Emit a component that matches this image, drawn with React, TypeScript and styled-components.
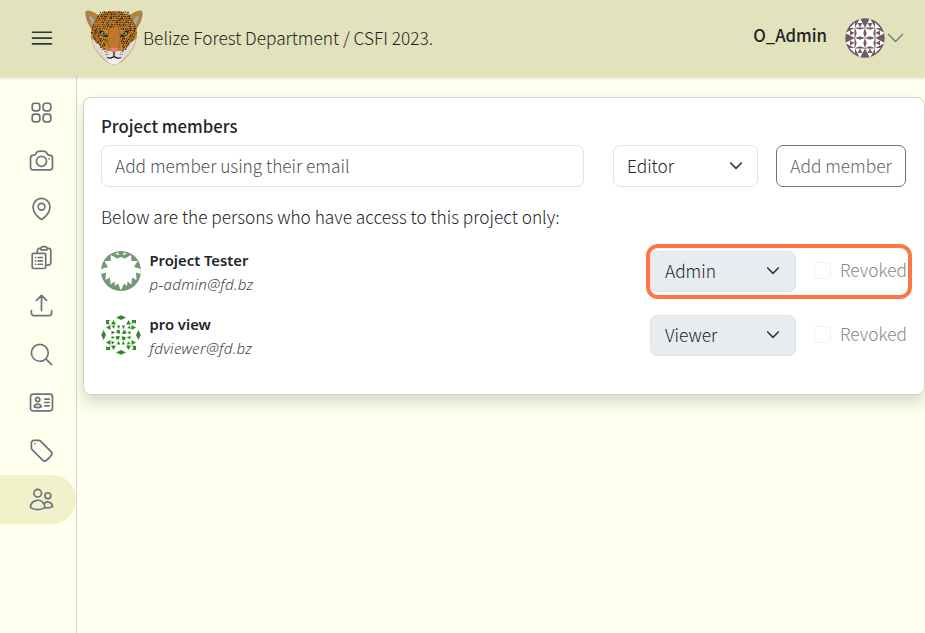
import React from 'react';
import styled, { createGlobalStyle } from 'styled-components';
import {
  HiOutlineSquares2X2,
  HiOutlineCamera,
  HiOutlineMapPin,
  HiOutlineClipboardDocumentList,
  HiOutlineArrowUpTray,
  HiOutlineMagnifyingGlass,
  HiOutlineIdentification,
  HiOutlineTag,
  HiOutlineUsers,
} from 'react-icons/hi2';

const GlobalStyle = createGlobalStyle`
  *, *::before, *::after { box-sizing: border-box; }
  body {
    margin: 0;
    overflow: hidden;
    background: #feffec;
    color: #212529;
    font-family: "Noto Sans CJK SC", "Noto Sans", sans-serif;
    font-size: 17.3px;
    font-weight: 300;
    line-height: 26px;
  }
  button, input { font: inherit; }
`;

const Page = styled.div`
  display: flex;
  flex-direction: column;
  height: 633px;
`;

const Header = styled.header`
  position: relative;
  z-index: 1;
  display: flex;
  align-items: center;
  flex: 0 0 77px;
  padding: 0 22px 1px 31px;
  background: #e2e2bd;
  box-shadow: 0 1px 3px rgba(0, 0, 0, 0.16);
`;

const MenuButton = styled.button`
  display: flex;
  margin-right: 32px;
  padding: 0;
  border: 0;
  background: none;
`;

const Brand = styled.div`
  display: flex;
  align-items: center;
  flex: 1;
  white-space: nowrap;
`;

const UserName = styled.span`
  margin: -7px 18px 0 0;
  font-weight: 500;
  font-size: 16.7px;
`;

const Chevron = styled.svg<{ $tone: string; $thick: number }>`
  flex: none;
  fill: none;
  stroke: ${(p) => p.$tone};
  stroke-width: ${(p) => p.$thick};
  stroke-linecap: round;
  stroke-linejoin: round;
`;

const Body = styled.div`
  display: flex;
  flex: 1;
  min-height: 0;
`;

const Sidebar = styled.nav`
  flex: 0 0 77px;
  padding-top: 11px;
  border-right: 1px solid #d5d6d8;
`;

const NavItem = styled.a<{ $active?: boolean }>`
  display: flex;
  align-items: center;
  height: 48.4px;
  padding-left: 27.5px;
  border-radius: 0 24px 24px 0;
  background: ${(p) => (p.$active ? '#f1f2c9' : 'transparent')};
  color: #6b7280;

  svg {
    width: 27px;
    height: 27px;
    stroke-width: 1.5;
  }
`;

const Main = styled.main`
  flex: 1;
  padding: 20px 0 0 6px;
`;

const Card = styled.section`
  height: 298px;
  padding: 15px 18px 0 17px;
  border: 1px solid #cfd0cb;
  border-radius: 8px;
  background: #fff;
  box-shadow: 0 8px 16px rgba(0, 0, 0, 0.15);
`;

const Heading = styled.h2`
  margin: 0 0 6px;
  font-size: 16.7px;
  font-weight: 500;
  line-height: 26px;
`;

const AddRow = styled.form`
  display: flex;
  height: 42px;
`;

const EmailInput = styled.input`
  width: 483px;
  margin-right: 29px;
  padding: 0 13px;
  border: 1px solid #dee2e6;
  border-radius: 7px;
  background: #fff;

  &::placeholder {
    color: #4f555b;
    opacity: 1;
  }
`;

const Select = styled.div<{ $disabled?: boolean }>`
  display: flex;
  align-items: center;
  justify-content: space-between;
  width: ${(p) => (p.$disabled ? 146 : 145)}px;
  height: ${(p) => (p.$disabled ? 41 : 42)}px;
  padding: 0 ${(p) => (p.$disabled ? 15 : 14)}px 0 ${(p) => (p.$disabled ? 14 : 13)}px;
  border: 1px solid #dee2e6;
  border-radius: 7px;
  background: ${(p) => (p.$disabled ? '#e9ecef' : '#fff')};
`;

const AddButton = styled.button`
  width: 130px;
  margin-left: 18px;
  padding: 0;
  border: 1px solid #6c757d;
  border-radius: 7px;
  background: transparent;
  color: #5e6870;
`;

const Note = styled.p`
  margin: 17px 0 14px;
`;

const Members = styled.ul`
  display: grid;
  grid-auto-rows: 64px;
  margin: 0;
  padding: 0;
  list-style: none;
`;

const Member = styled.li`
  display: flex;
  align-items: center;
  height: 54px;
`;

const Identity = styled.div`
  flex: 1;
  padding: 1px 0 0 8.5px;
  font-family: "Noto Sans", sans-serif;
`;

const Name = styled.div`
  font-size: 14.8px;
  font-weight: 650;
  line-height: 24px;
`;

const Email = styled.div`
  color: #42474c;
  font-size: 15.2px;
  font-style: italic;
  letter-spacing: 0.27px;
  line-height: 24px;
`;

const Access = styled.div`
  position: relative;
  display: flex;
  align-items: center;
  height: 54px;
`;

const Revoke = styled.label`
  display: flex;
  align-items: center;
  width: 110px;
  padding: 0 0 2px 18px;
  color: #85888a;
  white-space: nowrap;
`;

const CheckBox = styled.span`
  flex: none;
  width: 17px;
  height: 17px;
  margin-right: 9px;
  border: 1px solid #eeeff1;
  border-radius: 4px;
`;

const Highlight = styled.div`
  position: absolute;
  inset: 0 -6px -1px -4px;
  border: 4px solid #ff7645;
  border-radius: 12px;
  pointer-events: none;
`;

const MenuIcon = () => (
  <svg width="22" height="16" viewBox="0 0 22 16" stroke="#30363a" strokeWidth="1.6" strokeLinecap="round">
    <path d="M1.5 2.2h19M1.5 8.1h19M1.5 13.9h19" />
  </svg>
);

// Deterministic pseudo-random placement of the coat's rosettes.
const noise = (n: number) => {
  const v = Math.sin(n * 127.1) * 43758.5453;
  return v - Math.floor(v);
};

const spots: { x: number; y: number; r: number; a: number }[] = [];
for (let row = 0; row < 20; row++) {
  for (let col = 0; col < 22; col++) {
    const n = row * 25 + col + 1;
    const x = 7 + col * 2.1 + (row % 2) + (noise(n) - 0.5) * 0.8;
    const y = 2.3 + row * 2.05 + (noise(n + 900) - 0.5) * 0.8;
    const dx = Math.abs(x - 29);
    const bridge = y > 17 && dx < 6 + (y - 17) * 0.1;
    const edge = y < 15 ? 14 + y * 0.55 : 23 - Math.max(0, y - 26) * 0.8;
    const eye = dx > 6 && dx < 15 && y > 20 && y < 27;
    if (!bridge && !eye && dx < edge - 0.8) {
      spots.push({ x, y, r: 0.45 + 0.4 * noise(n + 1700), a: noise(n + 2500) * 180 });
    }
  }
}

const mirrored = [undefined, 'translate(58 0) scale(-1 1)'];

const Jaguar = () => (
  <svg width="58" height="56" viewBox="0 0 58 56">
    {mirrored.map((transform, i) => (
      <g key={i} transform={transform}>
        <path d="M.5 2C1-.2 4 .1 7 1.4c3 1.3 6 3 8 4.600L7 19.500C3 14.600 0 8 .5 2Z" fill="#b98134" />
        <path d="M2 3.200c3 .3 8 3.700 10.500 6.100L7.200 18C4 13.800 2 8 2 3.200Z" fill="#97866e" />
        <path d="M4 5.500c3 1.200 5 3.500 6 5.500l-3 4Z" fill="#b8a58b" />
      </g>
    ))}
    <path
      d="M29 1c7 0 11.500 1.200 15 4.500 4 3.800 7.800 10 8 17 .2 7-2.600 15.500-7.700 21.500C40 49 35 54.500 29 54.500S18 49 13.700 44C8.600 38 5.800 29.500 6 22.500c.2-7 4-13.200 8-17C17.500 2.200 22 1 29 1Z"
      fill="#c8822d"
    />
    <path d="M6.800 29c3 1 6 4 10 9l5.500 3h13.400l5.500-3c4-5 7-8 10-9-1.200 5-4 11-7.500 15-4.700 5-9.200 10.500-14.700 10.500S19 49 14.300 44C10.500 40 7.800 34 6.800 29Z" fill="#ded9d8" />
    <path d="M24 16h10l3 13-2 10-2 1h-8l-2-1-2-10Z" fill="#bd782b" />
    <path d="m24.500 18-2 10 2 10M33.500 18l2 10-2 10" fill="none" stroke="#a3631f" strokeWidth="1" />
    {spots.map((s, i) => (
      <ellipse key={i} cx={s.x} cy={s.y} rx={s.r * 1.3} ry={s.r * 0.85} fill="#2c200f" transform={`rotate(${s.a} ${s.x} ${s.y})`} />
    ))}
    {mirrored.map((transform, i) => (
      <g key={i} transform={transform}>
        <path d="M14 21c4-1.500 7 1 9 6-5 .4-8-1-9-6Z" fill="#292516" />
        <ellipse cx="18.500" cy="23.600" rx="2.700" ry="1.900" fill="#969754" />
        <circle cx="18.800" cy="23.500" r="1" fill="#20221b" />
        <path d="M18 42q6-3 10 2l-2 4-7-1Z" fill="#e5e1df" />
        <path d="m19 41.500 4 .8M20 44.500l3.500-.2" fill="none" stroke="#66584c" strokeWidth=".6" />
      </g>
    ))}
    <path d="M25 38.300q4-1.500 8 0-.5 3-4 5-3.500-2-4-5Z" fill="#e18078" />
    <path d="M21.500 48.500q7.500-1 15 0-2 5.800-7.500 5.800t-7.500-5.800Z" fill="#f0efed" />
    <path d="M29 42v4.500m0 0q-3 2.700-7 1m7-1q3 2.700 7 1" fill="none" stroke="#171717" strokeWidth="1.200" />
  </svg>
);

const quarterTurns = [0, 90, 180, 270];

const AdminAvatar = () => (
  <svg width="40" height="40" viewBox="0 0 40 40">
    <defs>
      <clipPath id="adminClip"><circle cx="20" cy="20" r="19.700" /></clipPath>
    </defs>
    <g clipPath="url(#adminClip)">
      <path fill="#735962" d="M0 0h40v40H0Z" />
      <g fill="#fff">
        {quarterTurns.map((a) => (
          <g key={a} transform={`rotate(${a} 20 20)`}>
            <path d="m10 10 5 1.700 5-1.700-1.700 5 1.700 5-5-1.700-5 1.700 1.700-5Z" />
            <path d="m10 9.500 2.500-4.500L15 9.500Zm5 0L17.500 5 20 9.500ZM12.500 5 15 0l2.500 5ZM20 9.500 22.500 5 25 9.500Zm5 0L27.500 5 30 9.500ZM22.500 5 25 0l2.500 5Z" />
            <path d="M4.500 10 10 4.500V10ZM2 6l4-4v4Z" />
          </g>
        ))}
      </g>
    </g>
  </svg>
);

const TesterAvatar = () => (
  <svg width="40" height="40" viewBox="0 0 40 40">
    <circle cx="20" cy="20" r="20" fill="#729a76" />
    <path
      fill="#fff"
      d="m9.500 10 .5-6 6 3.500L20 6l4 1.500L30 4l.5 6 6 0L33 16l6.800 2v5L35 21.500l.5 7.500-4.500-2.500-.5 7-4-3-.5 4.500-3-2.500L20 39.500 17 32.500 14 35l-.5-4.500-4 3-.5-7L4.500 29 5 21.500.2 23v-5L7 16l-3.500-6Z"
    />
    <path fill="#fff" d="m14 3 3-1.500L18.500 4ZM26 3l-3-1.500L21.500 4Z" />
  </svg>
);

const ViewerAvatar = () => (
  <svg width="40" height="40" viewBox="0 0 40 40" fill="#318a25">
    {quarterTurns.map((a) => (
      <g key={a} transform={`rotate(${a} 20 20)`}>
        <path d="m15 2.600 5-2.400 5 2.400L20 5Z" />
        <path d="M5 9V5h4l-1.500 2L9 9.500ZM10 9.500 12.500 5l2.500 4.500ZM25 9.500 27.500 5 30 9.500Z" />
        <path d="m10.500 11 3.500-.8-1 3.600ZM16 10.500h3.300L17.500 14Zm-5.500 5.300 3.800 1.700-3.800 1.800ZM15.500 15.500l3-1 .8 4.300-3.800-.8Z" />
      </g>
    ))}
  </svg>
);

const SelectArrow = () => (
  <Chevron width="14" height="10" viewBox="0 0 14 10" $tone="#343a40" $thick={1.7}>
    <path d="m1.700 2 5.300 5.300L12.300 2" />
  </Chevron>
);

const navIcons = [
  HiOutlineSquares2X2,
  HiOutlineCamera,
  HiOutlineMapPin,
  HiOutlineClipboardDocumentList,
  HiOutlineArrowUpTray,
  HiOutlineMagnifyingGlass,
  HiOutlineIdentification,
  HiOutlineTag,
  HiOutlineUsers,
];

const members = [
  { name: 'Project Tester', email: 'p-admin@fd.bz', role: 'Admin', Avatar: TesterAvatar, marked: true },
  { name: 'pro view', email: 'fdviewer@fd.bz', role: 'Viewer', Avatar: ViewerAvatar, marked: false },
];

export default function App() {
  return (
    <Page>
      <GlobalStyle />
      <Header>
        <MenuButton aria-label="Menu"><MenuIcon /></MenuButton>
        <Brand>
          <Jaguar />
          Belize Forest Department / CSFI 2023.
        </Brand>
        <UserName>O_Admin</UserName>
        <AdminAvatar />
        <Chevron width="18" height="12" viewBox="0 0 18 12" $tone="#6b7280" $thick={1.2}>
          <path d="m3.500 2.500 7 7 7-7" />
        </Chevron>
      </Header>
      <Body>
        <Sidebar>
          {navIcons.map((Icon, i) => (
            <NavItem key={i} $active={i === navIcons.length - 1}><Icon /></NavItem>
          ))}
        </Sidebar>
        <Main>
          <Card>
            <Heading>Project members</Heading>
            <AddRow>
              <EmailInput placeholder="Add member using their email" />
              <Select>Editor<SelectArrow /></Select>
              <AddButton type="button">Add member</AddButton>
            </AddRow>
            <Note>Below are the persons who have access to this project only:</Note>
            <Members>
              {members.map(({ name, email, role, Avatar, marked }) => (
                <Member key={name}>
                  <Avatar />
                  <Identity>
                    <Name>{name}</Name>
                    <Email>{email}</Email>
                  </Identity>
                  <Access>
                    <Select $disabled>{role}<SelectArrow /></Select>
                    <Revoke><CheckBox />Revoked</Revoke>
                    {marked && <Highlight />}
                  </Access>
                </Member>
              ))}
            </Members>
          </Card>
        </Main>
      </Body>
    </Page>
  );
}
